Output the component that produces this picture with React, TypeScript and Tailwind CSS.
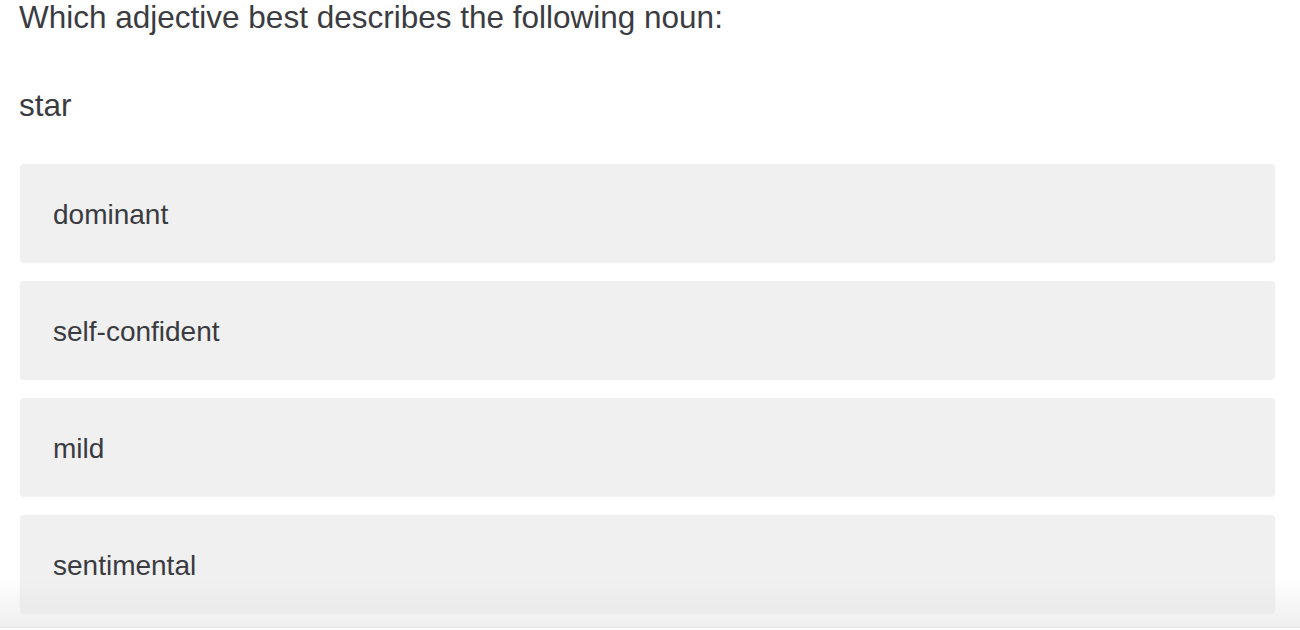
import React from "react";

const options = ["dominant", "self-confident", "mild", "sentimental"];

export default function App() {
  return (
    <div
      className="relative h-[630px] w-[1300px] overflow-hidden bg-white text-[#3b3c41]"
      style={{ fontFamily: '"Liberation Sans", Arial, Helvetica, sans-serif' }}
    >
      <div className="pl-[19px] -mt-[1px]">
        <div className="text-[31.5px] leading-[37px]">Which adjective best describes the following noun:</div>
        <div className="mt-[51px] text-[31.5px] leading-[37px]">star</div>
      </div>
      <div className="mt-[40px] flex flex-col gap-[19px] pl-[20px] pr-[25px]">
        {options.map((o) => (
          <div
            key={o}
            className="flex h-[98px] items-center rounded-[4px] bg-[#f0f0f0] pl-[33px] pt-[3px] text-[28px] text-[#3a3b40] shadow-[0_1px_2px_rgba(0,0,0,0.06)]"
          >
            {o}
          </div>
        ))}
      </div>
      <div className="pointer-events-none absolute bottom-0 left-0 h-[52px] w-full">
        <div className="h-[49px] w-full bg-gradient-to-b from-[rgba(255,255,255,0)] to-[rgba(225,225,225,0.55)]" />
        <div className="h-[1px] w-full bg-[#e4e4e4]" />
        <div className="h-[2px] w-full bg-white" />
      </div>
    </div>
  );
}
